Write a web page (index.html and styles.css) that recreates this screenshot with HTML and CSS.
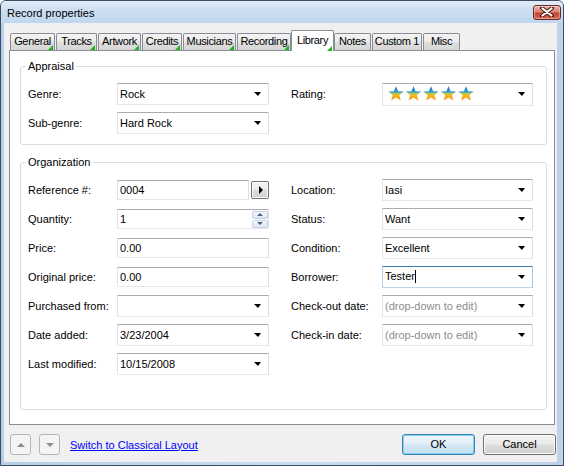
FILE: index.html
```html
<!DOCTYPE html>
<html>
<head>
<meta charset="utf-8">
<title>Record properties</title>
<link rel="stylesheet" href="styles.css">
</head>
<body>
<div class="window">
  <div class="titlebar">
    <span class="title">Record properties</span>
    <div class="close">
      <svg width="14" height="10" viewBox="0 0 14 10"><path d="M2 1 L12 9 M12 1 L2 9" stroke="#4a1a16" stroke-width="4" stroke-linecap="round"/><path d="M2.5 1.5 L11.5 8.5 M11.5 1.5 L2.5 8.5" stroke="#fff" stroke-width="2.2" stroke-linecap="round"/></svg>
    </div>
  </div>
  <div class="client">
    <div class="tabs">
      <div class="tab t-general mark">General</div>
      <div class="tab t-tracks mark">Tracks</div>
      <div class="tab t-artwork mark">Artwork</div>
      <div class="tab t-credits mark">Credits</div>
      <div class="tab t-musicians mark">Musicians</div>
      <div class="tab t-recording mark">Recording</div>
      <div class="tab t-library mark selected">Library</div>
      <div class="tab t-notes">Notes</div>
      <div class="tab t-custom">Custom 1</div>
      <div class="tab t-misc">Misc</div>
    </div>
    <div class="panel">
      <fieldset class="group appraisal">
        <legend>Appraisal</legend>
        <div class="grid">
          <div class="label">Genre:</div>
          <div class="combo"><span>Rock</span><i class="arrow"></i></div>
          <div class="label right">Rating:</div>
          <div class="combo rating">
            <svg class="stars" width="88" height="15" viewBox="0 0 88 15">
              <defs>
                <linearGradient id="sg" x1="0" y1="0" x2="0" y2="1">
                  <stop offset="0" stop-color="#1777cf"/>
                  <stop offset="0.38" stop-color="#2b9ad8"/>
                  <stop offset="0.52" stop-color="#b9c94a"/>
                  <stop offset="0.62" stop-color="#f6b81e"/>
                  <stop offset="1" stop-color="#f49312"/>
                </linearGradient>
                <path id="star" d="M8 0.3 L10.1 5.2 L15.6 5.6 L11.4 9.1 L12.8 14.5 L8 11.6 L3.2 14.5 L4.6 9.1 L0.4 5.6 L5.9 5.2 Z" fill="url(#sg)"/>
              </defs>
              <use href="#star" x="0"/>
              <use href="#star" x="17.5"/>
              <use href="#star" x="35"/>
              <use href="#star" x="52.5"/>
              <use href="#star" x="70"/>
            </svg>
            <i class="arrow"></i>
          </div>
          <div class="label">Sub-genre:</div>
          <div class="combo"><span>Hard Rock</span><i class="arrow"></i></div>
        </div>
      </fieldset>
      <fieldset class="group organization">
        <legend>Organization</legend>
        <div class="grid">
          <div class="label">Reference #:</div>
          <div class="ref">
            <div class="input">0004</div>
            <div class="go"><i class="go-arrow"></i></div>
          </div>
          <div class="label right">Location:</div>
          <div class="combo"><span>Iasi</span><i class="arrow"></i></div>

          <div class="label">Quantity:</div>
          <div class="input spin-input"><span>1</span>
            <div class="spinner"><div class="spin up"><i></i></div><div class="spin down"><i></i></div></div>
          </div>
          <div class="label right">Status:</div>
          <div class="combo"><span>Want</span><i class="arrow"></i></div>

          <div class="label">Price:</div>
          <div class="input">0.00</div>
          <div class="label right">Condition:</div>
          <div class="combo"><span>Excellent</span><i class="arrow"></i></div>

          <div class="label">Original price:</div>
          <div class="input">0.00</div>
          <div class="label right">Borrower:</div>
          <div class="combo focused"><span>Tester<b class="caret"></b></span><i class="arrow"></i></div>

          <div class="label">Purchased from:</div>
          <div class="combo"><span></span><i class="arrow"></i></div>
          <div class="label right">Check-out date:</div>
          <div class="combo"><span class="hint">(drop-down to edit)</span><i class="arrow"></i></div>

          <div class="label">Date added:</div>
          <div class="combo"><span>3/23/2004</span><i class="arrow"></i></div>
          <div class="label right">Check-in date:</div>
          <div class="combo"><span class="hint">(drop-down to edit)</span><i class="arrow"></i></div>

          <div class="label">Last modified:</div>
          <div class="combo"><span>10/15/2008</span><i class="arrow"></i></div>
        </div>
      </fieldset>
    </div>
    <div class="footer">
      <div class="nav"><i class="nav-up"></i></div>
      <div class="nav"><i class="nav-down"></i></div>
      <a class="link" href="#">Switch to Classical Layout</a>
      <div class="spacer"></div>
      <div class="button default">OK</div>
      <div class="button">Cancel</div>
    </div>
  </div>
</div>
</body>
</html>
```
FILE: styles.css
```css
* { box-sizing: border-box; }

body {
  margin: 0;
  background: #ffffff;
  font-family: "Liberation Sans", Arial, sans-serif;
  font-size: 11px;
  color: #000;
}

.window {
  width: 564px;
  height: 466px;
  border: 1px solid #3a4b62;
  border-radius: 6px 6px 0 0;
  background: linear-gradient(90deg, #b8cfe9, #c9dbef 50%, #bdd2ea);
  padding: 0 6px 3px 3px;
  display: flex;
  flex-direction: column;
}

.titlebar {
  height: 22px;
  margin: 0 -6px 0 -3px;
  padding: 0 2px 0 6px;
  display: flex;
  align-items: center;
  justify-content: space-between;
  background: linear-gradient(#e4edf8, #cddff2 40%, #c1d6ee);
  border-radius: 5px 5px 0 0;
}

.title {
  padding-top: 1px;
}

.close {
  width: 28px;
  height: 15px;
  border: 1px solid #6b2a24;
  border-radius: 3px;
  background: linear-gradient(#e9b3a8, #d98573 45%, #c7442f 55%, #d86a4e);
  display: flex;
  align-items: center;
  justify-content: center;
  box-shadow: inset 0 0 0 1px rgba(255,255,255,0.35);
}

.client {
  flex: 1;
  background: #f0f0f0;
  display: flex;
  flex-direction: column;
}

.tabs {
  height: 27px;
  display: flex;
  align-items: flex-end;
  padding-left: 6px;
}

.tab {
  position: relative;
  height: 17px;
  border: 1px solid #898c95;
  border-bottom: none;
  border-radius: 2px 2px 0 0;
  background: linear-gradient(#f4f4f4, #ebebeb 45%, #dedede 55%, #d6d6d6);
  text-align: center;
  line-height: 15px;
  margin-right: 1px;
  white-space: nowrap;
  letter-spacing: -0.35px;
}

.tab.mark::after {
  content: "";
  position: absolute;
  right: 1px;
  bottom: 0;
  width: 0;
  height: 0;
  border-left: 5px solid transparent;
  border-bottom: 5px solid #1db51d;
}

.tab.selected {
  height: 21px;
  margin-bottom: -1px;
  background: #ffffff;
  line-height: 15px;
  padding-top: 2px;
  z-index: 1;
}

.t-general { width: 45px; }
.t-tracks { width: 41px; }
.t-artwork { width: 43px; }
.t-credits { width: 40px; }
.t-musicians { width: 53px; }
.t-recording { width: 54px; margin-right: 0; }
.t-library { width: 43px; margin-right: 0; }
.t-notes { width: 37px; margin-right: 1px; }
.t-custom { width: 50px; }
.t-misc { width: 37px; }

.panel {
  margin-left: 5px;
  width: 546px;
  height: 375px;
  border: 1px solid #898c95;
  background: #ffffff;
  padding: 0 7px 0 10px;
}

.group {
  margin: 9px 0 0 0;
  padding: 10px 0 10px 7px;
  border: 1px solid #d5dfe5;
  border-radius: 3px;
  min-width: 0;
}

.group legend {
  margin-left: -2px;
  padding: 0 2px;
  line-height: 13px;
}

.organization {
  margin-top: 11px;
  padding-bottom: 34px;
}

.grid {
  display: grid;
  grid-template-columns: 89px 152px 113px 151px;
  grid-auto-rows: 22px;
  row-gap: 7px;
  align-items: center;
}

.label {
  white-space: nowrap;
}

.label.right {
  padding-left: 22px;
}

.combo {
  height: 22px;
  border: 1px solid;
  border-color: #abadb3 #dbdfe6 #e3e9ef #e2e3ea;
  background: #ffffff;
  display: flex;
  align-items: center;
  justify-content: space-between;
  padding: 0 7px 1px 2px;
  white-space: nowrap;
}

.combo.rating {
  height: 23px;
  padding-left: 5px;
}

.combo.focused {
  border-color: #3d7bad #a4c9e3 #b7d9ed #b5cfe7;
}

.arrow {
  width: 0;
  height: 0;
  border-left: 4px solid transparent;
  border-right: 3px solid transparent;
  border-top: 4px solid #000;
  margin-top: 1px;
}

.hint {
  color: #8d8d8d;
}

.caret {
  display: inline-block;
  width: 1px;
  height: 13px;
  background: #000;
  vertical-align: -3px;
  margin-left: 0;
}

.stars {
  display: block;
}

.input {
  height: 20px;
  border: 1px solid;
  border-color: #abadb3 #dbdfe6 #e3e9ef #e2e3ea;
  background: #ffffff;
  display: flex;
  align-items: center;
  padding: 0 2px 1px 2px;
}

.ref {
  display: flex;
  align-items: center;
  gap: 2px;
}

.ref .input {
  flex: 1;
}

.go {
  width: 18px;
  height: 18px;
  border: 1px solid #707070;
  border-radius: 2px;
  background: linear-gradient(#f4f4f4, #ebebeb 45%, #dddddd 55%, #cfcfcf);
  box-shadow: inset 0 0 0 1px #fbfbfb;
  display: flex;
  align-items: center;
  justify-content: center;
}

.go-arrow {
  width: 0;
  height: 0;
  border-top: 4px solid transparent;
  border-bottom: 4px solid transparent;
  border-left: 4px solid #000;
  margin-left: 1px;
}

.spin-input {
  justify-content: space-between;
  padding-right: 0;
}

.spinner {
  width: 16px;
  height: 17px;
  display: flex;
  flex-direction: column;
  gap: 1px;
  margin-bottom: -1px;
}

.spin {
  flex: 1;
  border: 1px solid #c6d1e1;
  border-radius: 2px;
  background: linear-gradient(#f3f7fc, #dfe8f4);
  display: flex;
  align-items: center;
  justify-content: center;
}

.spin i {
  width: 0;
  height: 0;
  border-left: 3px solid transparent;
  border-right: 3px solid transparent;
}

.spin.up i { border-bottom: 3px solid #4d6185; }
.spin.down i { border-top: 3px solid #4d6185; }

.footer {
  margin-top: 9px;
  height: 21px;
  display: flex;
  align-items: center;
  padding-left: 6px;
  padding-right: 1px;
}

.nav {
  width: 21px;
  height: 21px;
  border: 1px solid #b5b5b5;
  border-radius: 3px;
  background: #f4f4f4;
  display: flex;
  align-items: center;
  justify-content: center;
  margin-right: 8px;
}

.nav-up, .nav-down {
  width: 0;
  height: 0;
  border-left: 4px solid transparent;
  border-right: 4px solid transparent;
}

.nav-up { border-bottom: 4px solid #8c8c8c; }
.nav-down { border-top: 4px solid #8c8c8c; }

.link {
  margin-left: 2px;
  color: #0000ff;
  text-decoration: underline;
}

.spacer {
  flex: 1;
}

.button {
  width: 73px;
  height: 21px;
  border: 1px solid #707070;
  border-radius: 3px;
  background: linear-gradient(#f2f2f2, #ebebeb 45%, #dddddd 55%, #cfcfcf);
  box-shadow: inset 0 0 0 1px #fcfcfc;
  display: flex;
  align-items: center;
  justify-content: center;
  padding-bottom: 1px;
}

.button.default {
  margin-right: 8px;
  border-color: #3c7fb1;
  box-shadow: inset 0 0 0 1px #7fd3f5;
  background: linear-gradient(#eef6fb, #e3eff8 45%, #d3e6f3 55%, #c6dff0);
}
```
